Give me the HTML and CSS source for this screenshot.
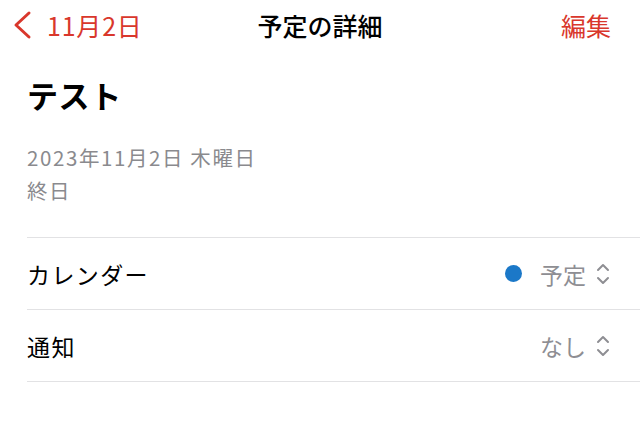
FILE: index.html
```html
<!DOCTYPE html>
<html lang="ja">
<head>
<meta charset="utf-8">
<title>予定の詳細</title>
<link rel="stylesheet" href="styles.css">
</head>
<body>
<div id="NavBar">
  <a class="back" href="#">
    <svg class="back-icon" width="20" height="30" viewBox="0 0 20 30"><path d="M16 3 L3 15 L16 27" fill="none" stroke="#d9372c" stroke-width="3" stroke-linecap="round" stroke-linejoin="round"/></svg>
    <span>11月2日</span>
  </a>
  <div class="nav-title">予定の詳細</div>
  <a class="edit" href="#">編集</a>
</div>

<div id="Event">
  <h1 class="event-title">テスト</h1>
  <div class="event-date">2023年11月2日 木曜日</div>
  <div class="event-date">終日</div>
</div>

<ul id="Rows">
  <li class="row">
    <span class="label">カレンダー</span>
    <span class="value"><span class="dot"></span>予定<svg class="updown" width="14" height="22" viewBox="0 0 14 22"><path d="M2 7 L7 2 L12 7 M2 15 L7 20 L12 15" fill="none" stroke="#8e8e93" stroke-width="2" stroke-linecap="round" stroke-linejoin="round"/></svg></span>
  </li>
  <li class="row">
    <span class="label">通知</span>
    <span class="value">なし<svg class="updown" width="14" height="22" viewBox="0 0 14 22"><path d="M2 7 L7 2 L12 7 M2 15 L7 20 L12 15" fill="none" stroke="#8e8e93" stroke-width="2" stroke-linecap="round" stroke-linejoin="round"/></svg></span>
  </li>
</ul>
</body>
</html>
```

FILE: styles.css
```css
* {margin:0; padding:0; box-sizing:border-box;}
body {background:#fff; color:#000; font-family:"Noto Sans CJK JP","Noto Sans",sans-serif;}
a {text-decoration:none;}

#NavBar {height:50px; display:flex; align-items:center; justify-content:space-between; padding:0 29px 0 13px; position:relative;}
#NavBar .back {display:flex; align-items:center; gap:14px; color:#d9372c; font-size:25px; letter-spacing:0.8px;}
#NavBar .back-icon {display:block;}
#NavBar .nav-title {position:absolute; left:0; right:0; text-align:center; font-size:25px; font-weight:500; pointer-events:none;}
#NavBar .edit {color:#d9372c; font-size:25px;}

#Event {padding:25px 27px 30px;}
#Event .event-title {font-size:31px; font-weight:700; line-height:40px; margin-bottom:26px; letter-spacing:0.6px;}
#Event .event-date {font-size:20.5px; line-height:33px; color:#8a8a8e; letter-spacing:1.6px;}

#Rows {list-style:none; margin-left:27px;}
#Rows .row {height:72px; display:flex; align-items:center; justify-content:space-between; border-top:1px solid #e2e2e4; padding-right:30px; font-size:23px;}
#Rows .row:last-child {border-bottom:1px solid #e2e2e4; height:73px;}
#Rows .label {letter-spacing:1.4px;}
#Rows .value {display:flex; align-items:center; color:#8e8e93;}
#Rows .dot {width:17px; height:17px; border-radius:50%; background:#1b78c8; margin-right:18px;}
#Rows .updown {margin-left:10px;}
```
